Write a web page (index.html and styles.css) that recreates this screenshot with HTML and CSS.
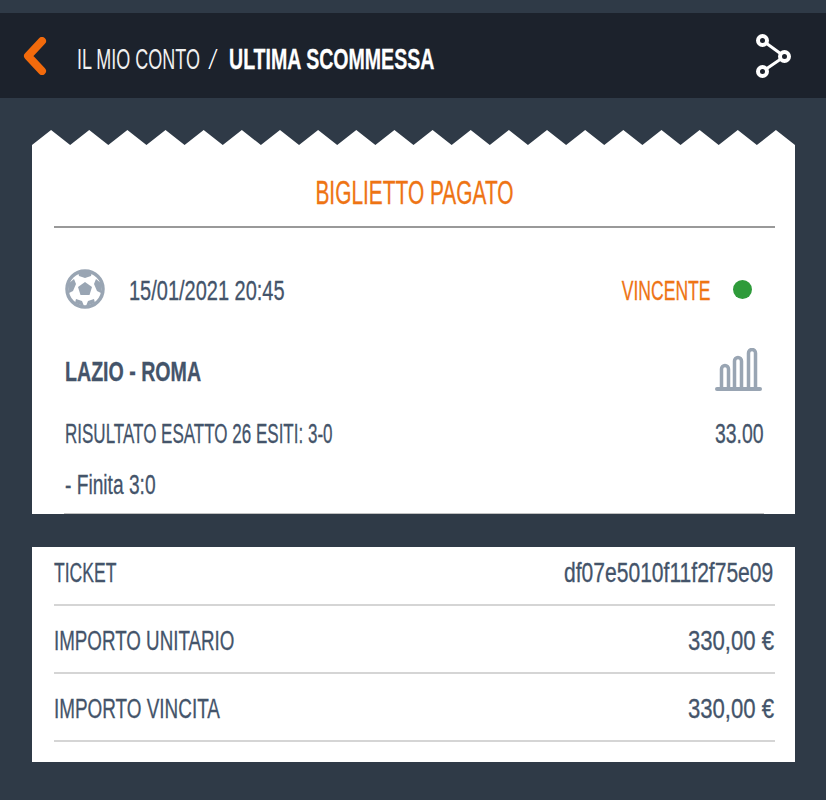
FILE: index.html
```html
<!DOCTYPE html>
<html lang="it">
<head>
    <meta charset="UTF-8">
    <meta name="viewport" content="width=device-width, initial-scale=1.0">
    <title>Ultima scommessa</title>
    <link rel="stylesheet" href="styles.css">
</head>
<body>
    <header class="topbar">
        <svg class="back-icon" viewBox="0 0 26 38" width="26" height="38">
            <path d="M20 4 L6 19 L20 34" fill="none" stroke="#f26a0c" stroke-width="8" stroke-linecap="round" stroke-linejoin="round"/>
        </svg>
        <div class="crumbs">
            <span class="crumb-light"><span class="cond">IL MIO CONTO</span></span>
            <span class="crumb-sep">/</span>
            <span class="crumb-bold"><span class="cond">ULTIMA SCOMMESSA</span></span>
        </div>
        <svg class="share-icon" viewBox="0 0 36 46" width="36" height="46">
            <path d="M6.500 7.500 L28.500 23.500 L6.500 38.500" fill="none" stroke="#fff" stroke-width="3"/>
            <circle cx="6.500" cy="7.500" r="4.500" fill="#1c222c" stroke="#fff" stroke-width="4"/>
            <circle cx="28.500" cy="23.500" r="4.500" fill="#1c222c" stroke="#fff" stroke-width="4"/>
            <circle cx="6.500" cy="38.500" r="4.500" fill="#1c222c" stroke="#fff" stroke-width="4"/>
        </svg>
    </header>

    <main class="content">
        <svg class="zigzag" viewBox="0 0 760 15" width="763" height="15" preserveAspectRatio="none">
            <polygon fill="#fff" points="0,15 19,0 38,15 57,0 76,15 95,0 114,15 133,0 152,15 171,0 190,15 209,0 228,15 247,0 266,15 285,0 304,15 323,0 342,15 361,0 380,15 399,0 418,15 437,0 456,15 475,0 494,15 513,0 532,15 551,0 570,15 589,0 608,15 627,0 646,15 665,0 684,15 703,0 722,15 741,0 760,15"/>
        </svg>
        <section class="ticket">
            <h1 class="ticket-title"><span class="cond title-text">BIGLIETTO PAGATO</span></h1>

            <div class="bet">
                <div class="bet-head">
                    <svg class="ball-icon" viewBox="0 0 40 40" width="40" height="40">
                        <circle cx="20" cy="20" r="18" fill="#fff" stroke="#99a5b3" stroke-width="3.500"/>
                        <polygon fill="#99a5b3" points="20,13 27,18 24.500,26 15.500,26 13,18"/>
                        <path fill="#99a5b3" d="M13 3 L27 3 L26 7 L20 9 L14 7 Z M3 15 L9 10 L11 15 L8 22 L4 24 Z M37 15 L31 10 L29 15 L32 22 L36 24 Z M10 34 L11 30 L17 32 L19 37 Z M30 34 L29 30 L23 32 L21 37 Z"/>
                    </svg>
                    <div class="bet-date"><span class="cond date-text">15/01/2021 20:45</span></div>
                    <span class="cond to-right status-text">VINCENTE</span>
                    <span class="status-dot"></span>
                </div>

                <div class="bet-match">
                    <span class="cond match-text">LAZIO - ROMA</span>
                    <svg class="bars-icon" viewBox="0 0 48 44" width="48" height="44">
                        <g fill="none" stroke="#99a5b3" stroke-width="3.500">
                            <path d="M6.500 40 V21 a3.500 3.500 0 0 1 7 0 V40"/>
                            <path d="M19.500 40 V13 a3.500 3.500 0 0 1 7 0 V40"/>
                            <path d="M33.500 40 V5 a3.500 3.500 0 0 1 7 0 V40"/>
                            <path d="M2 41 H45" stroke-width="4" stroke-linecap="round"/>
                        </g>
                    </svg>
                </div>

                <div class="bet-line">
                    <span class="cond line-text">RISULTATO ESATTO 26 ESITI: 3-0</span>
                    <span class="cond to-right odds-text">33.00</span>
                </div>
                <div class="bet-result"><span class="cond result-text">- Finita 3:0</span></div>
            </div>
        </section>

        <section class="summary">
            <div class="summary-row">
                <span class="cond ticket-label">TICKET</span>
                <span class="cond to-right ticket-code">df07e5010f11f2f75e09</span>
            </div>
            <div class="summary-row">
                <span class="cond unit-label">IMPORTO UNITARIO</span>
                <span class="cond to-right money">330,00 €</span>
            </div>
            <div class="summary-row">
                <span class="cond win-label">IMPORTO VINCITA</span>
                <span class="cond to-right money">330,00 €</span>
            </div>
        </section>
    </main>
</body>
</html>
```

FILE: styles.css
```css
body {
    margin: 0;
    padding: 13px 0 0;
    background: #2f3a47;
    color: #44546a;
    font-family: "Liberation Sans", Arial, sans-serif;
}

/* no condensed font installed, so text is squeezed sideways */
.cond {
    display: inline-block;
    white-space: nowrap;
    transform-origin: left center;
    -webkit-text-stroke: .3px currentColor;
}

.to-right {
    transform-origin: right center;
}

.topbar {
    display: flex;
    align-items: center;
    height: 85px;
    padding: 0 34px 0 22px;
    background: #1c222c;
    color: white;
}

.back-icon {
    flex: none;
    margin-right: 29px;
}

.crumbs {
    flex: 1;
    display: flex;
    align-items: center;
    margin-top: 6px;
    font-size: 30px;
}

.crumb-light {
    width: 122px;
    color: #f0f0f0;
}

.crumb-light .cond {
    transform: scaleX(.6);
    -webkit-text-stroke: 0;
}

.crumb-sep {
    margin: 0 11px 0 9px;
    font-family: Roboto, sans-serif;
    font-size: 26px;
    font-weight: 300;
}

.crumb-bold {
    font-weight: bold;
}

.crumb-bold .cond {
    transform: scaleX(.652);
}

.content {
    width: 763px;
    margin: 32px 0 0 32px;
}

.zigzag {
    display: block;
}

.ticket {
    background: white;
}

.ticket-title {
    margin: 0 20px 0 22px;
    height: 83px;
    line-height: 96px;
    box-sizing: border-box;
    border-bottom: 2px solid #999;
    text-align: center;
    font-size: 33px;
    font-weight: normal;
    color: #ee7414;
}

.title-text {
    transform: scaleX(.633);
    transform-origin: center;
}

.bet {
    margin: 0 31px 0 32px;
    border-bottom: 1px solid #c0c0c0;
}

.bet-head {
    display: flex;
    align-items: center;
    height: 122px;
    font-size: 27px;
}

.ball-icon {
    margin-left: 1px;
    margin-right: 24px;
}

.bet-date {
    flex: 1;
    margin-top: 4px;
}

.date-text {
    transform: scaleX(.74);
}

.status-text {
    margin-top: 4px;
    color: #ee7414;
    transform: scaleX(.65);
}

.status-dot {
    width: 19px;
    height: 19px;
    margin: 0 12px 0 22px;
    border-radius: 50%;
    background: #2e9b3a;
}

.bet-match {
    display: flex;
    align-items: center;
    justify-content: space-between;
    height: 44px;
    padding-left: 1px;
    font-size: 28px;
    font-weight: bold;
}

.match-text {
    transform: scaleX(.7);
}

.bars-icon {
    margin: -4px 1px 0 0;
}

.bet-line {
    display: flex;
    justify-content: space-between;
    margin-top: 25px;
    padding-left: 1px;
    font-size: 27px;
    line-height: 30px;
}

.line-text {
    transform: scaleX(.63);
}

.odds-text {
    transform: scaleX(.72);
}

.bet-result {
    margin-top: 19px;
    height: 45px;
    padding-left: 1px;
    font-size: 27px;
    line-height: 34px;
}

.result-text {
    transform: scaleX(.71);
}

.summary {
    margin-top: 33px;
    padding: 0 20px 20px 22px;
    background: white;
}

.summary-row {
    display: flex;
    justify-content: space-between;
    height: 68px;
    box-sizing: border-box;
    border-bottom: 2px solid #d5d5d5;
    font-size: 27px;
    line-height: 70px;
}

.summary-row:first-child {
    height: 59px;
    line-height: 52px;
}

.ticket-label {
    transform: scaleX(.65);
}

.ticket-code {
    margin-right: 2px;
    transform: scaleX(.78);
}

.unit-label {
    transform: scaleX(.695);
}

.win-label {
    transform: scaleX(.7);
}

.money {
    margin-right: 1px;
    transform: scaleX(.82);
}
```
